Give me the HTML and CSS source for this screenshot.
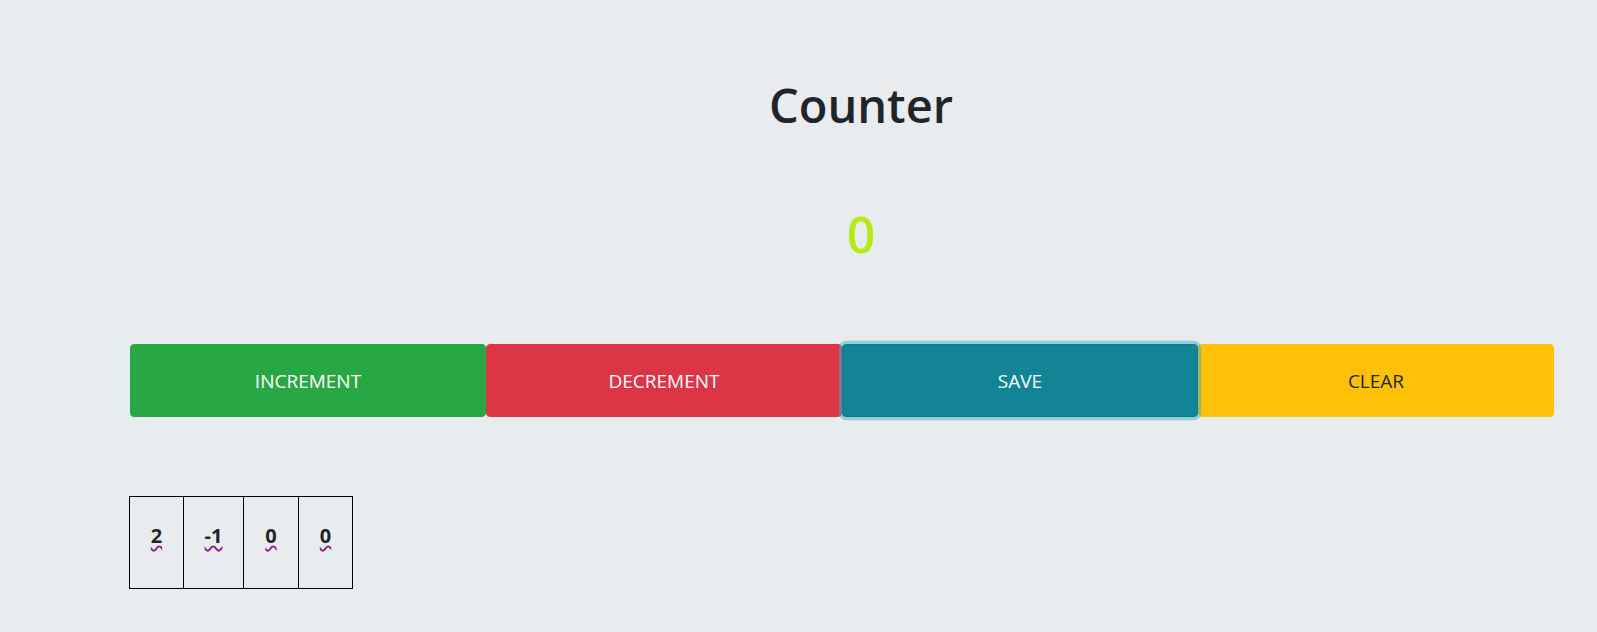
FILE: index.html
```html
<!DOCTYPE html>
<html>
<head>
<meta charset="utf-8">
<link rel="stylesheet" href="styles.css">
</head>
<body>
<div class="page">
  <header class="head">
    <h1 class="title">Counter</h1>
    <div class="count">0</div>
  </header>
  <div class="actions">
    <button class="btn btn-success">INCREMENT</button>
    <button class="btn btn-danger">DECREMENT</button>
    <button class="btn btn-info focused">SAVE</button>
    <button class="btn btn-warning">CLEAR</button>
  </div>
  <table class="saved">
    <tr>
      <td class="c1"><span class="val">2</span></td>
      <td class="c2"><span class="val">-1</span></td>
      <td class="c3"><span class="val">0</span></td>
      <td class="c4"><span class="val">0</span></td>
    </tr>
  </table>
</div>
</body>
</html>
```

FILE: styles.css
```css
html, body {
  margin: 0;
  padding: 0;
}
body {
  background: #e9ecef;
  color: #212529;
  font-family: "Open Sans", "Noto Sans", sans-serif;
  width: 1597px;
  height: 632px;
  overflow: hidden;
}
.page {
  display: flex;
  flex-direction: column;
  align-items: flex-start;
}
.head {
  align-self: stretch;
  padding-left: 125px;
  display: flex;
  flex-direction: column;
  align-items: center;
}
.title {
  margin: 77px 0 0;
  font-size: 47px;
  font-weight: 600;
  line-height: 1.2;
}
.count {
  margin-top: 71px;
  font-size: 50px;
  font-weight: 600;
  line-height: 1.2;
  color: #b5ea12;
}
.actions {
  align-self: stretch;
  margin: 80px 43px 0 130px;
  display: grid;
  grid-template-columns: repeat(4, 1fr);
}
.btn {
  height: 73px;
  border: 1px solid transparent;
  border-radius: 4px;
  font-family: inherit;
  font-size: 19px;
  font-weight: 400;
  color: #fff;
  padding: 0;
  cursor: pointer;
}
.btn-success { background: #28a745; border-color: #28a745; }
.btn-danger { background: #dc3545; border-color: #dc3545; }
.btn-info { background: #138496; border-color: #117a8b; }
.btn-warning { background: #ffc107; border-color: #ffc107; color: #212529; }
.focused {
  box-shadow: 0 0 0 3.2px rgba(58, 176, 195, 0.5);
  position: relative;
}
.saved {
  margin: 79px 0 0 129px;
  border-collapse: collapse;
}
.saved td {
  border: 1px solid #000;
  height: 92px;
  padding: 0 0 14px;
  box-sizing: border-box;
  text-align: center;
  vertical-align: middle;
}
.c1 { width: 54px; }
.c2 { width: 60px; }
.c3 { width: 55px; }
.c4 { width: 54px; }
.val {
  font-weight: 700;
  font-size: 20px;
  text-decoration: underline wavy #8e1a8e;
  text-decoration-thickness: 1.5px;
  text-underline-offset: 2px;
}
```
